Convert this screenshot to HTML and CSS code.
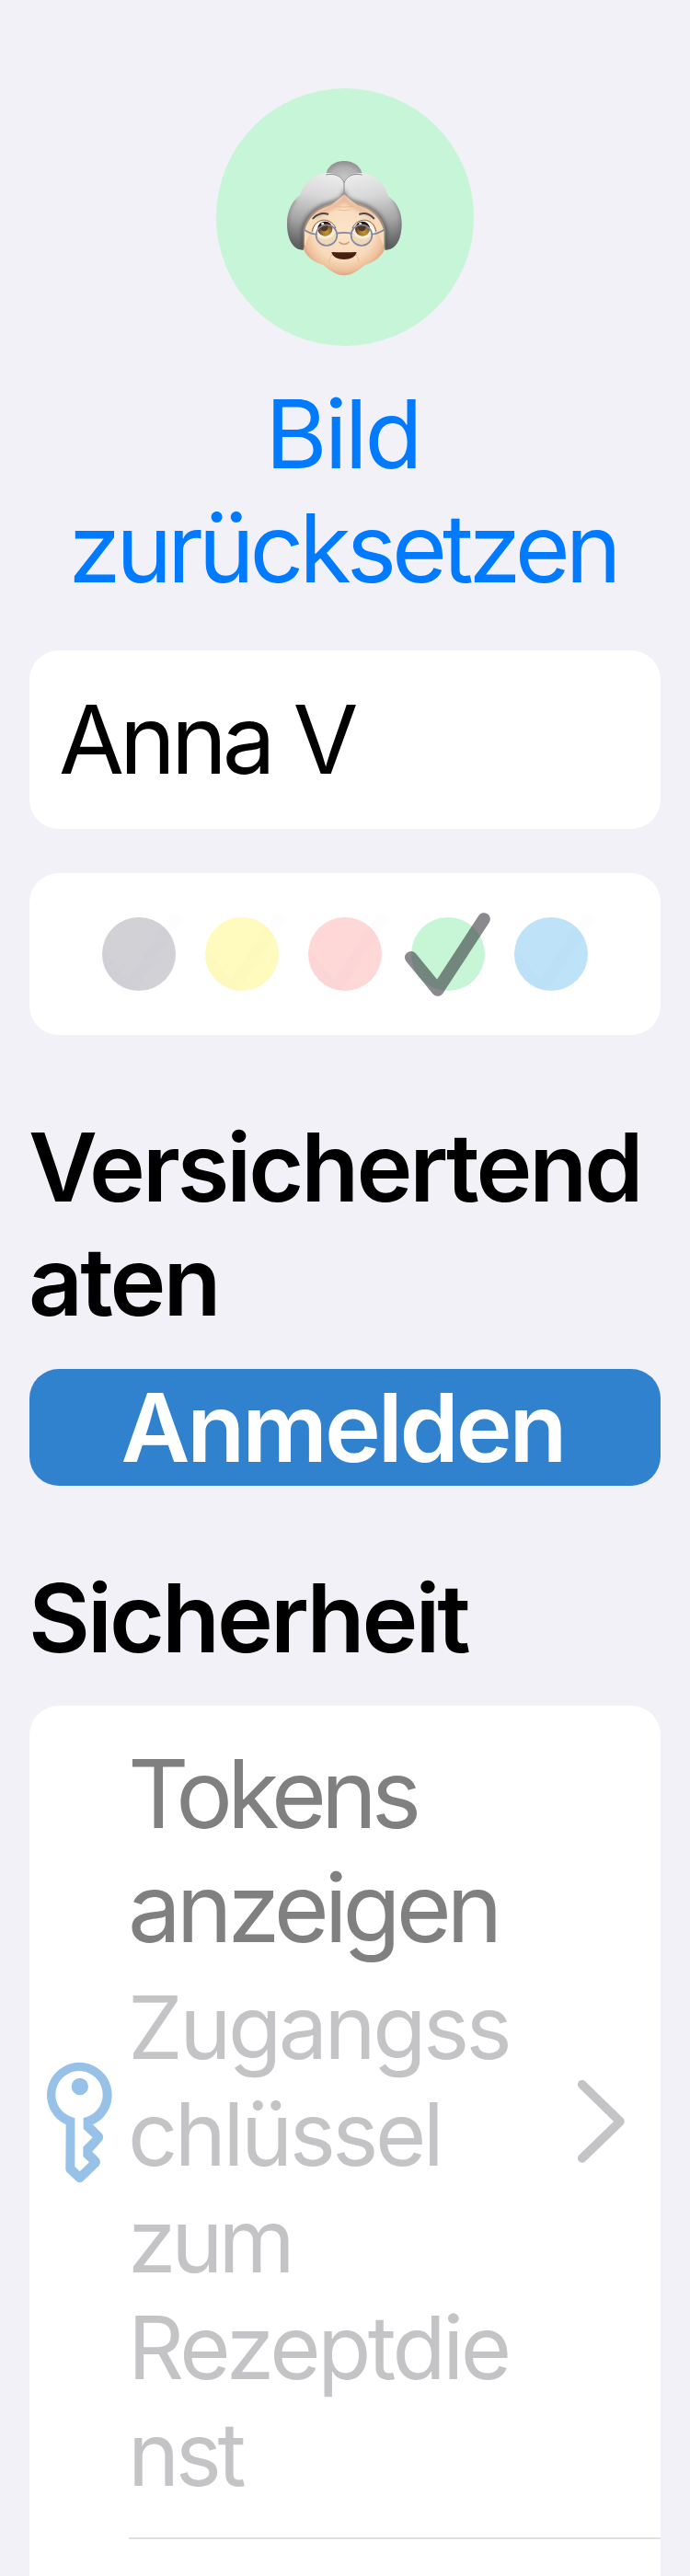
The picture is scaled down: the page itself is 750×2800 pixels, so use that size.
FILE: index.html
```html
<!DOCTYPE html>
<html lang="de">
<head>
<meta charset="utf-8">
<title>Profil</title>
<link rel="stylesheet" href="styles.css">
</head>
<body>
<main class="screen">
  <div class="avatar">
    <svg class="avatar-face" viewBox="0 0 450 516" role="img" aria-label="Großmutter">
      <defs>
        <radialGradient id="bun" cx=".5" cy=".6" r=".6"><stop offset="0" stop-color="#c4c4c4"/><stop offset=".6" stop-color="#b0b0b0"/><stop offset="1" stop-color="#8c8c8c"/></radialGradient>
        <linearGradient id="hairL" gradientUnits="userSpaceOnUse" x1="150" y1="110" x2="95" y2="365"><stop offset="0" stop-color="#ececec"/><stop offset=".3" stop-color="#d8d8d8"/><stop offset=".65" stop-color="#a4a4a4"/><stop offset="1" stop-color="#585858"/></linearGradient>
        <linearGradient id="hairR" gradientUnits="userSpaceOnUse" x1="295" y1="110" x2="350" y2="365"><stop offset="0" stop-color="#ececec"/><stop offset=".3" stop-color="#d8d8d8"/><stop offset=".65" stop-color="#a4a4a4"/><stop offset="1" stop-color="#585858"/></linearGradient>
        <radialGradient id="skin" gradientUnits="userSpaceOnUse" cx="222" cy="300" r="155"><stop offset="0" stop-color="#fce3c8"/><stop offset=".65" stop-color="#f8dabb"/><stop offset=".85" stop-color="#eec09c"/><stop offset="1" stop-color="#d99a76"/></radialGradient>
        <radialGradient id="iris" cx=".6" cy=".75" r=".7"><stop offset="0" stop-color="#c08d08"/><stop offset=".45" stop-color="#8a5708"/><stop offset=".75" stop-color="#3e1505"/><stop offset="1" stop-color="#2c0d04"/></radialGradient>
        <filter id="soft" x="-20%" y="-20%" width="140%" height="140%"><feGaussianBlur stdDeviation="6"/></filter>
        <clipPath id="hairClip"><path d="M222 140C206 112 160 105 125 126C98 142 86 164 78 186C53 204 36 240 36 278C36 333 57 366 89 365L130 260L222 184L314 260L356 365C389 366 410 333 410 278C410 240 393 208 366 190C358 166 346 142 319 126C284 105 238 112 222 140Z"/></clipPath>
      </defs>
      <path fill="url(#bun)" d="M162 125C164 93 191 75 222 75S280 93 282 125L222 160Z"/>
      <path fill="url(#skin)" d="M222 178C155 185 89 245 89 320V358C94 384 125 407 154 414C177 433 198 448 222 448S267 433 290 414C319 407 350 384 355 358V320C355 245 289 185 222 178Z"/>
      <path fill="url(#hairL)" d="M222 140C206 112 160 105 125 126C98 142 86 164 78 186C53 204 36 240 36 278C36 333 57 366 89 365V300C98 255 130 227 175 214C197 208 218 198 222 184Z"/>
      <path fill="url(#hairR)" d="M222 140C238 112 284 105 319 126C346 142 358 166 366 190C393 208 410 240 410 278C410 333 389 366 356 365V300C347 255 315 227 270 214C248 208 227 198 222 184Z"/>
      <g clip-path="url(#hairClip)" fill="none" filter="url(#soft)">
        <path stroke="#444" stroke-width="12" opacity=".75" d="M89 368V300C98 255 130 227 175 214C197 208 218 198 222 184C227 198 248 208 270 214C315 227 347 255 356 300V368"/>
        <path stroke="#666" stroke-width="12" opacity=".6" d="M60 200C42 220 34 250 36 278C36 333 57 366 89 365M386 200C403 220 412 250 410 278C410 333 389 366 356 365"/>
      </g>
      <g clip-path="url(#hairClip)"><path fill="#fadcbd" d="M222 192C218 205 197 215 175 221C135 232 104 260 93 304V375H352V304C341 260 310 232 270 221C248 215 227 205 222 192Z"/></g>
      <path fill="none" stroke="#df9f7e" stroke-width="14" opacity=".65" filter="url(#soft)" d="M128 258C145 237 208 225 222 195C237 225 300 237 317 258"/>
      <path fill="none" stroke="#8c8c8c" stroke-width="3" d="M163 120C191 113 215 125 222 146V184M281 120C253 113 229 125 222 146"/>
      <g fill="none" stroke="#e6bd97" stroke-width="3" stroke-linecap="round"><path d="M194 223Q222 228 250 223M202 234Q222 238 242 234M187 372Q175 388 174 402M257 372Q269 388 270 402"/></g>
      <g fill="none" stroke="#45474b" stroke-width="6" stroke-linecap="round"><path d="M121 262Q142 241 169 248M273 248Q300 241 319 262"/></g>
      <path fill="#fffaf0" d="M122 306C128 263 176 255 194 296C197 330 146 345 122 306ZM322 306C316 263 268 255 250 296C247 330 298 345 322 306Z"/>
      <path fill="none" stroke="#8a5b42" stroke-width="3" d="M118 305C124 261 176 254 195 294M326 305C320 261 268 254 249 294"/>
      <circle cx="160" cy="296" r="24" fill="url(#iris)"/><circle cx="282" cy="296" r="24" fill="url(#iris)"/>
      <circle cx="157" cy="291" r="13" fill="#210602"/><circle cx="280" cy="291" r="13" fill="#210602"/>
      <g fill="#fff"><circle cx="152" cy="280" r="4.500"/><circle cx="275" cy="280" r="4.500"/></g>
      <g fill="#d9c79d" fill-opacity=".25" stroke="#8089a0" stroke-width="5"><circle cx="165" cy="317" r="34"/><circle cx="279" cy="317" r="34"/></g>
      <path fill="none" stroke="#8089a0" stroke-width="5" stroke-linecap="round" d="M199 311Q222 306 245 311M132 314Q115 313 91 299M312 314Q329 313 353 299"/>
      <path fill="none" stroke="#d3a07e" stroke-width="5" stroke-linecap="round" d="M207 340Q213 346 222 346T237 340"/>
      <path fill="#48200f" d="M181 372Q222 374 263 372C260 388 243 396 222 396S184 388 181 372Z"/>
    </svg>
  </div>

  <a class="reset">Bild<br><span class="tight">zurücksetzen</span></a>

  <div class="card name-field">Anna V</div>

  <div class="card palette">
    <div class="swatch grey"><svg class="check" viewBox="0 0 100 100"><path d="M12.8 50.7L41.7 86L92 9"/></svg></div>
    <div class="swatch yellow"><svg class="check" viewBox="0 0 100 100"><path d="M12.8 50.7L41.7 86L92 9"/></svg></div>
    <div class="swatch red"><svg class="check" viewBox="0 0 100 100"><path d="M12.8 50.7L41.7 86L92 9"/></svg></div>
    <div class="swatch green selected"><svg class="check" viewBox="0 0 100 100"><path d="M12.8 50.7L41.7 86L92 9"/></svg></div>
    <div class="swatch blue"><svg class="check" viewBox="0 0 100 100"><path d="M12.8 50.7L41.7 86L92 9"/></svg></div>
  </div>

  <h2 class="heading">Versichertend<br>aten</h2>
  <button class="login">Anmelden</button>

  <h2 class="heading">Sicherheit</h2>
  <section class="card list">
    <div class="row">
      <svg class="key" viewBox="62 63 216 396">
        <path fill-rule="evenodd" d="M124 268A106 106 0 1 1 212 268L241 297Q250 309 241 321L210 356L231 377Q241 390 231 403L180 452Q169 461 158 452L127 423Q123 419 123 413ZM153 246A77 77 0 1 1 181 246V282L211 310L180 341V372L200 391L169 421L153 405Z"/>
        <circle cx="169.500" cy="144" r="27.500"/>
      </svg>
      <div class="row-text">
        <div class="row-title"><span class="tighter">Tokens</span><br><span class="tight">anzeigen</span></div>
        <div class="row-sub">Zugangss<br>chlüssel<br><span class="tight">zum</span><br>Rezeptdie<br><span class="snug">nst</span></div>
      </div>
      <svg class="chevron" viewBox="0 0 52 92"><path d="M5.700 4.700L47 45L5.700 85"/></svg>
    </div>
  </section>
</main>
</body>
</html>
```

FILE: styles.css
```css
* { box-sizing: border-box; }

body {
  margin: 0;
  background: #f2f1f7;
  font-family: Inter, "Liberation Sans", sans-serif;
  font-size: 103px;
  font-weight: 440;
  line-height: 124px;
  color: #000;
}

.screen {
  display: flex;
  flex-direction: column;
  height: 2800px;
  padding: 96px 32px 0;
  overflow: hidden;
}

.avatar {
  display: flex;
  flex: none;
  align-items: center;
  justify-content: center;
  align-self: center;
  width: 280px;
  height: 280px;
  border-radius: 50%;
  background: #c7f5d7;
}

.avatar-face { width: 150px; height: 172px; }

.reset {
  margin-top: 34px;
  padding-right: 5px;
  color: #007aff;
  text-align: center;
  letter-spacing: -3px;
  white-space: nowrap;
}

.tight { letter-spacing: -5.1px; }
.tighter { letter-spacing: -6.1px; }
.snug { letter-spacing: -4.4px; }

.card {
  flex: none;
  border-radius: 32px;
  background: #fff;
}

.name-field {
  height: 194px;
  margin-top: 49px;
  padding: 35px 32px;
  letter-spacing: -5px;
}

.palette {
  display: flex;
  align-items: center;
  justify-content: center;
  gap: 32px;
  height: 176px;
  margin-top: 48px;
}

.swatch {
  position: relative;
  width: 80px;
  height: 80px;
  border-radius: 50%;
}

.grey { background: #d1d1d6; }
.yellow { background: #fffbbe; }
.red { background: #fed7d7; }
.green { background: #c6f6d5; }
.blue { background: #bee3f8; }

.check {
  position: absolute;
  left: -13px;
  top: -7px;
  width: 100px;
  height: 100px;
  overflow: visible;
  fill: none;
  stroke: #3c3c43;
  stroke-width: 13.6;
  stroke-linecap: round;
  stroke-linejoin: round;
  opacity: 0.008;
}

.selected .check { opacity: 0.6; }

.heading {
  margin: 82px 0 0 -1px;
  font-size: inherit;
  font-weight: 600;
  letter-spacing: -3px;
  white-space: nowrap;
}

.login {
  flex: none;
  height: 127px;
  margin-top: 33px;
  padding: 0 5px 0 0;
  border: 0;
  border-radius: 32px;
  background: #3182ce;
  color: #fff;
  font: inherit;
  font-weight: 600;
  letter-spacing: -3.1px;
}

.list {
  height: 1000px;
  margin-top: 33px;
}

.row {
  position: relative;
  display: flex;
  align-items: center;
  height: 906px;
  padding: 0 39px 0 19px;
}

.row::after {
  content: "";
  position: absolute;
  left: 108px;
  right: 0;
  bottom: 0;
  height: 2px;
  background: #e0e0e0;
}

.key {
  width: 72px;
  height: 132px;
  fill: #98c1e7;
}

.row-text {
  flex: 1;
  margin-left: 16px;
  white-space: nowrap;
}

.row-title { color: #808080; }

.row-sub {
  margin-top: 10px;
  color: #c4c4c6;
  font-size: 95px;
  line-height: 116px;
  letter-spacing: -3.5px;
}

.chevron {
  width: 52px;
  height: 92px;
  fill: none;
  stroke: #c4c4c6;
  stroke-width: 9.6;
  stroke-linecap: round;
  stroke-linejoin: round;
}
```
